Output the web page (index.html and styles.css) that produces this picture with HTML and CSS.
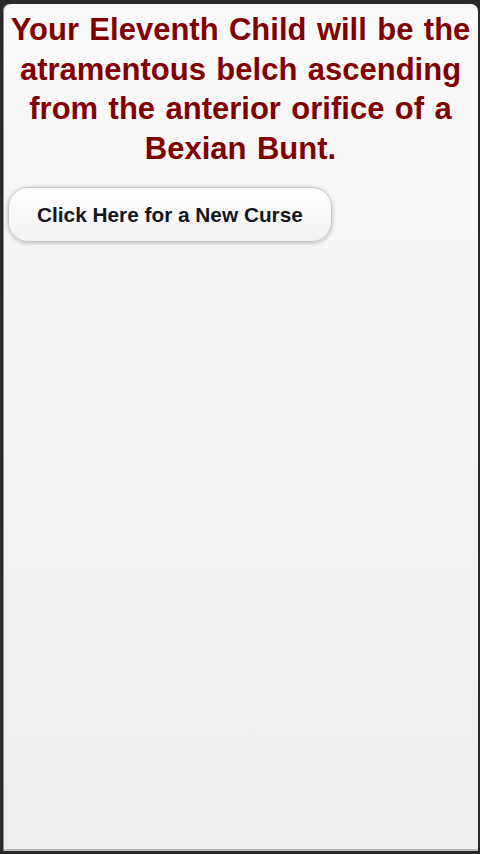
FILE: index.html
```html
<!DOCTYPE html>
<html>
<head>
<meta charset="utf-8">
<link rel="stylesheet" href="styles.css">
</head>
<body>
<div class="frame">
  <div class="screen">
    <h1 class="curse">Your Eleventh Child will be the atramentous belch ascending from the anterior orifice of a Bexian Bunt.</h1>
    <button class="new-curse">Click Here for a New Curse</button>
  </div>
</div>
</body>
</html>
```
FILE: styles.css
```css
html, body {
  margin: 0;
  padding: 0;
  height: 100%;
}
body {
  background: #2a2a2a;
  font-family: "Liberation Sans", Arial, sans-serif;
}
.frame {
  box-sizing: border-box;
  height: 854px;
  width: 480px;
  padding: 4px 2px 3px 3px;
  display: flex;
}
.screen {
  flex: 1;
  display: flex;
  flex-direction: column;
  align-items: flex-start;
  background: linear-gradient(#f9f9f9, #eeeeee);
  border-radius: 7px 7px 0 0;
  box-shadow: inset 1px 0 0 #8a8a8a, inset 0 -2px 0 #bdbdbd;
}
.curse {
  margin: 6px 0 0 0;
  width: 100%;
  text-align: center;
  font-size: 31px;
  line-height: 39.5px;
  font-weight: bold;
  color: #800000;
  word-spacing: 1.8px;
}
.new-curse {
  margin: 19px 0 0 5px;
  height: 55px;
  padding: 0 28px;
  font-family: "Liberation Sans", Arial, sans-serif;
  font-size: 20.8px;
  font-weight: bold;
  color: #15151f;
  background: linear-gradient(#ffffff, #f1f1f1);
  border: 1px solid #c8c8c8;
  border-radius: 20px;
  box-shadow: 0 1px 4px rgba(0, 0, 0, 0.25);
  text-shadow: 0 1px 0 #fff;
}
```
